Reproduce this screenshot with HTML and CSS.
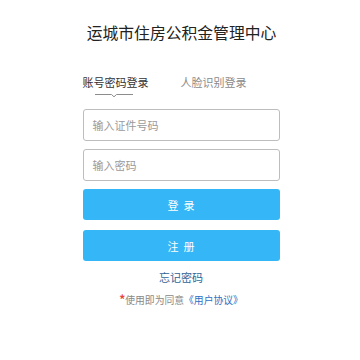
FILE: index.html
```html
<!DOCTYPE html>
<html lang="zh">
<head>
<meta charset="utf-8">
<link rel="stylesheet" href="styles.css">
</head>
<body>
<div class="page">
  <h1 class="title">运城市住房公积金管理中心</h1>
  <div class="tabs">
    <div class="tab active">账号密码登录
      <svg class="tab-mark" width="38" height="5" viewBox="0 0 38 5"><path d="M0 1.5 H16.5 L19 3.8 L21.5 1.5 H38" fill="none" stroke="#8c8c8c" stroke-width="1"/></svg>
    </div>
    <div class="tab">人脸识别登录</div>
  </div>
  <div class="field"><span class="ph">输入证件号码</span></div>
  <div class="field second"><span class="ph">输入密码</span></div>
  <div class="btn">登录</div>
  <div class="btn next">注册</div>
  <div class="forgot">忘记密码</div>
  <div class="agree"><span class="star">*</span>使用即为同意<span class="link">《用户协议》</span></div>
</div>
</body>
</html>
```
FILE: styles.css
```css
html, body {
  margin: 0;
  padding: 0;
  background: #fff;
}
body {
  font-family: "Noto Sans CJK SC", "Noto Sans", sans-serif;
}
.page {
  width: 197px;
  margin: 0 auto;
  padding-left: 2px;
  display: flex;
  flex-direction: column;
}
.title {
  margin: 23px 0 0 -6px;
  width: 210px;
  font-size: 15.8px;
  line-height: 20px;
  font-weight: 400;
  color: #222;
  text-align: center;
  white-space: nowrap;
}
.tabs {
  display: flex;
  gap: 32px;
  margin-top: 33px;
  height: 33px;
}
.tab {
  position: relative;
  font-size: 11px;
  line-height: 12px;
  color: #8a8a8a;
  white-space: nowrap;
}
.tab.active {
  color: #333;
}
.tab-mark {
  position: absolute;
  left: 12px;
  top: 17px;
}
.field {
  height: 30px;
  border: 1px solid #bdbdbd;
  border-radius: 3px;
  display: flex;
  align-items: center;
  padding-left: 9px;
}
.field.second {
  margin-top: 8px;
}
.ph {
  font-size: 11px;
  color: #9a9a9a;
}
.btn {
  height: 31px;
  border-radius: 3px;
  background: #35b6f6;
  color: #fff;
  font-size: 11px;
  letter-spacing: 5px;
  text-indent: 5px;
  display: flex;
  align-items: center;
  justify-content: center;
  margin-top: 8px;
}
.btn.next {
  margin-top: 10px;
}
.forgot {
  margin-top: 9px;
  text-align: center;
  font-size: 11px;
  line-height: 14px;
  color: #2f6699;
}
.agree {
  margin-top: 9px;
  text-align: center;
  font-size: 9.8px;
  line-height: 12px;
  color: #888;
  white-space: nowrap;
}
.star {
  color: #e8453c;
  font-size: 12px;
  font-weight: 700;
}
.link {
  color: #2f6fc4;
}
```
